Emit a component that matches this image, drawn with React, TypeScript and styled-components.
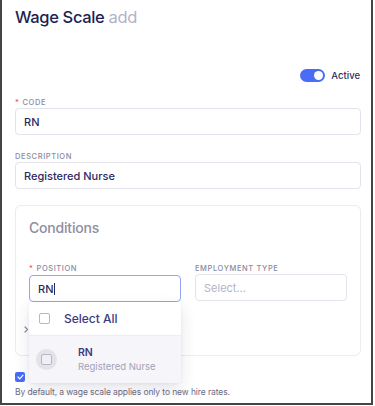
import React from 'react'
import styled, { createGlobalStyle } from 'styled-components'

const GlobalStyle = createGlobalStyle`
  html, body {
    margin: 0;
    padding: 0;
    background: #ffffff;
  }
  body {
    font-family: Inter, "Noto Sans", sans-serif;
    -webkit-font-smoothing: antialiased;
  }
`

const Frame = styled.div`
  position: relative;
  width: 373px;
  height: 405px;
  box-sizing: border-box;
  border: 2px solid #444448;
  border-top: none;
  padding: 6px 10px 0 13px;
  overflow: hidden;
  background: #fff;
`

const Title = styled.h1`
  margin: 0;
  font-size: 16.5px;
  line-height: 22px;
  font-weight: 500;
  letter-spacing: -0.35px;
  color: #211e52;
`

const TitleMuted = styled.span`
  color: #b3b2cb;
  font-weight: 400;
`

const ToggleRow = styled.div`
  display: flex;
  justify-content: flex-end;
  align-items: center;
  gap: 6px;
  margin-top: 41px;
  height: 13px;
  padding-right: 1px;
`

const Toggle = styled.div<{ on?: boolean }>`
  position: relative;
  width: 25px;
  height: 13px;
  border-radius: 7px;
  background: ${({ on }) => (on ? '#4a6cf6' : '#d4d4de')};

  &::after {
    content: '';
    position: absolute;
    top: 2px;
    left: ${({ on }) => (on ? '14px' : '2px')};
    width: 9px;
    height: 9px;
    border-radius: 50%;
    background: #fff;
  }
`

const ToggleLabel = styled.span`
  font-size: 9.5px;
  font-weight: 500;
  color: #2e2c5f;
`

const Field = styled.div<{ mt?: number }>`
  position: relative;
  margin-top: ${({ mt }) => mt ?? 0}px;
`

const Label = styled.div`
  font-size: 7.5px;
  line-height: 10px;
  height: 10px;
  font-weight: 500;
  letter-spacing: 0.6px;
  text-transform: uppercase;
  color: #8a89a0;
  white-space: nowrap;
`

const Star = styled.span`
  color: #ef4b4b;
  margin-right: 3px;
`

const Input = styled.div<{ focused?: boolean; placeholder?: boolean }>`
  display: flex;
  align-items: center;
  height: 27px;
  box-sizing: border-box;
  margin-top: ${({ focused }) => (focused ? 1 : 0)}px;
  padding: 0 8px;
  border: 1px solid ${({ focused }) => (focused ? '#93a5f1' : '#e3e3eb')};
  border-radius: 4px;
  font-size: 11px;
  font-weight: ${({ placeholder }) => (placeholder ? 400 : 500)};
  color: ${({ placeholder }) => (placeholder ? '#b4b3c4' : '#2c2961')};
  background: #fff;
`

const Caret = styled.span`
  display: inline-block;
  width: 1px;
  height: 12px;
  margin-left: 1px;
  background: #2c2961;
`

const Panel = styled.section`
  margin-top: 16px;
  height: 151px;
  box-sizing: border-box;
  border: 1px solid #ebebf1;
  border-radius: 6px;
  padding: 13px 13px 0 13px;
`

const PanelTitle = styled.h2`
  margin: 0;
  font-size: 14px;
  line-height: 18px;
  font-weight: 500;
  color: #8e8da1;
  letter-spacing: -0.2px;
`

const Grid = styled.div`
  display: grid;
  grid-template-columns: 1fr 1fr;
  column-gap: 14px;
  margin-top: 27px;
`

const MoreRow = styled.div`
  display: flex;
  align-items: center;
  margin-top: 23px;
  margin-left: -5px;
  height: 8px;
`

const Dropdown = styled.div`
  position: absolute;
  z-index: 5;
  top: 100%;
  left: 0;
  right: 0;
  background: #fff;
  border-radius: 0 0 4px 4px;
  box-shadow: 0 6px 16px rgba(40, 40, 90, 0.12), 0 1px 3px rgba(40, 40, 90, 0.06);
  overflow: hidden;
`

const SelectAllRow = styled.div`
  display: flex;
  align-items: center;
  gap: 14px;
  height: 33px;
  padding-left: 10px;
  border-bottom: 1px solid #ececf2;
  font-size: 12px;
  font-weight: 500;
  color: #3d3a7c;
`

const Box = styled.span<{ bg?: string }>`
  display: inline-block;
  width: 11px;
  height: 11px;
  box-sizing: border-box;
  border: 1px solid #b7b6c6;
  border-radius: 2px;
  background: ${({ bg }) => bg ?? '#fff'};
`

const OptionRow = styled.div`
  display: flex;
  align-items: center;
  gap: 21px;
  height: 47px;
  padding-left: 7px;
  background: #f5f5fa;
`

const Circle = styled.span`
  display: flex;
  align-items: center;
  justify-content: center;
  width: 21px;
  height: 21px;
  border-radius: 50%;
  background: #e3e3ea;
`

const OptionText = styled.div`
  display: flex;
  flex-direction: column;
  gap: 2px;
`

const OptionCode = styled.span`
  font-size: 10.5px;
  line-height: 13px;
  font-weight: 600;
  color: #3d3a7c;
`

const OptionSub = styled.span`
  font-size: 9.5px;
  line-height: 12px;
  color: #a3a2b4;
`

const CheckRow = styled.div`
  display: flex;
  align-items: center;
  margin-top: 16px;
  height: 10px;
`

const Checked = styled.span`
  display: flex;
  align-items: center;
  justify-content: center;
  width: 10px;
  height: 10px;
  border-radius: 2px;
  background: #4a6cf6;
`

const Hint = styled.p`
  margin: 4px 0 0 0;
  font-size: 8.5px;
  line-height: 12px;
  color: #6c6b82;
  letter-spacing: -0.1px;
  white-space: nowrap;
`

export default function App() {
  return (
    <>
      <GlobalStyle />
      <Frame>
        <Title>
          Wage Scale <TitleMuted>add</TitleMuted>
        </Title>

        <ToggleRow>
          <Toggle on />
          <ToggleLabel>Active</ToggleLabel>
        </ToggleRow>

        <Field mt={16}>
          <Label>
            <Star>*</Star>Code
          </Label>
          <Input>RN</Input>
        </Field>

        <Field mt={17}>
          <Label>Description</Label>
          <Input>Registered Nurse</Input>
        </Field>

        <Panel>
          <PanelTitle>Conditions</PanelTitle>
          <Grid>
            <Field>
              <Label>
                <Star>*</Star>Position
              </Label>
              <Input focused>
                RN
                <Caret />
              </Input>
              <Dropdown>
                <SelectAllRow>
                  <Box />
                  Select All
                </SelectAllRow>
                <OptionRow>
                  <Circle>
                    <Box bg="#efeff4" />
                  </Circle>
                  <OptionText>
                    <OptionCode>RN</OptionCode>
                    <OptionSub>Registered Nurse</OptionSub>
                  </OptionText>
                </OptionRow>
              </Dropdown>
            </Field>
            <Field>
              <Label>Employment Type</Label>
              <Input placeholder>Select...</Input>
            </Field>
          </Grid>
          <MoreRow>
            <svg width="5" height="7" viewBox="0 0 5 7" fill="none">
              <path d="M1 1l2.5 2.5L1 6" stroke="#8a899c" strokeWidth="1.2" strokeLinecap="round" strokeLinejoin="round" />
            </svg>
          </MoreRow>
        </Panel>

        <CheckRow>
          <Checked>
            <svg width="7" height="6" viewBox="0 0 7 6" fill="none">
              <path d="M1 3l1.8 1.8L6 1.2" stroke="#fff" strokeWidth="1.2" strokeLinecap="round" strokeLinejoin="round" />
            </svg>
          </Checked>
        </CheckRow>
        <Hint>By default, a wage scale applies only to new hire rates.</Hint>
      </Frame>
    </>
  )
}
